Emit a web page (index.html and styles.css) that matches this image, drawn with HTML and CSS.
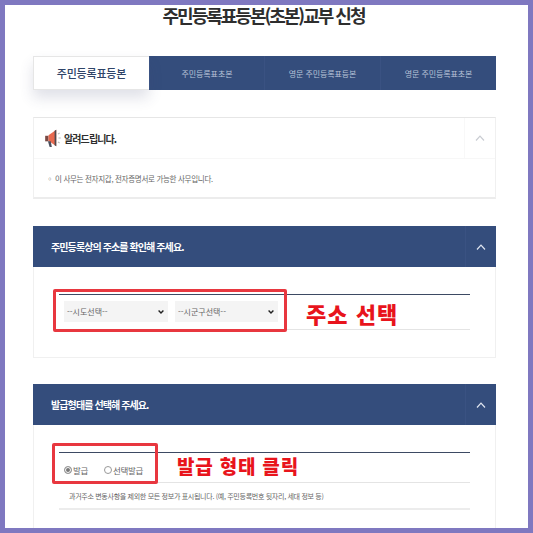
FILE: index.html
```html
<!DOCTYPE html>
<html lang="ko">
<head>
    <meta charset="UTF-8">
    <meta name="viewport" content="width=device-width, initial-scale=1.0">
    <title>주민등록표등본(초본)교부 신청</title>
    <link rel="stylesheet" href="styles.css">
</head>
<body>
    <div class="container">
    <h1>주민등록표등본(초본)교부 신청</h1>

    <!-- 탭 -->
    <div class="tabs">
        <div class="tab active">주민등록표등본</div>
        <div class="tab">주민등록표초본</div>
        <div class="tab">영문 주민등록표등본</div>
        <div class="tab">영문 주민등록표초본</div>
    </div>

    <!-- 알려드립니다 -->
    <div class="section notice">
        <div class="section-head">
            <svg class="megaphone" width="19" height="20" viewBox="0 0 17 18">
                <path d="M1 7h3v5H1z" fill="#7a4a44"/>
                <path d="M4 6.500 11 1.500v15L4 11.500z" fill="#e8694f"/>
                <path d="M9.500 2.500 11 1.500v15l-1.500-1z" fill="#4b4b50"/>
                <path d="M3.500 12h2.500l1 5H5z" fill="#4a4f5e"/>
                <path d="M12.500 5.500l1.500-1M13 9h2M12.500 12.500l1.500 1" stroke="#b9b9b9" fill="none"/>
            </svg>
            <h2>알려드립니다.</h2>
            <span class="toggle">
                <svg width="10" height="6" viewBox="0 0 10 6"><path d="M1 5.500 5 1.200l4 4.300" fill="none" stroke="currentColor" stroke-width="1.200"/></svg>
            </span>
        </div>
        <p class="notice-text">◦ 이 사무는 전자지갑, 전자증명서로 가능한 사무입니다.</p>
    </div>

    <!-- 주소 선택 -->
    <div class="section">
        <div class="section-head dark">
            <h2>주민등록상의 주소를 확인해 주세요.</h2>
            <span class="toggle">
                <svg width="10" height="6" viewBox="0 0 10 6"><path d="M1 5.500 5 1.200l4 4.300" fill="none" stroke="currentColor" stroke-width="1.200"/></svg>
            </span>
        </div>
        <div class="section-body address">
            <div class="form-row">
                <select><option>--시도선택--</option></select>
                <select><option>--시군구선택--</option></select>
            </div>
            <div class="mark mark-address"></div>
            <div class="label label-address">주소 선택</div>
        </div>
    </div>

    <!-- 발급 형태 -->
    <div class="section last">
        <div class="section-head dark">
            <h2>발급형태를 선택해 주세요.</h2>
            <span class="toggle">
                <svg width="10" height="6" viewBox="0 0 10 6"><path d="M1 5.500 5 1.200l4 4.300" fill="none" stroke="currentColor" stroke-width="1.200"/></svg>
            </span>
        </div>
        <div class="section-body issue">
            <div class="form-row radios">
                <label><span class="radio on"></span>발급</label>
                <label><span class="radio"></span>선택발급</label>
            </div>
            <p class="help">과거주소 변동사항을 제외한 모든 정보가 표시됩니다. (예, 주민등록번호 뒷자리, 세대 정보 등)</p>
            <div class="mark mark-issue"></div>
            <div class="label label-issue">발급 형태 클릭</div>
        </div>
    </div>

    </div>
</body>
</html>
```

FILE: styles.css
```css
html, body {
    margin: 0;
    height: 100%;
}
body {
    font-family: "Noto Sans CJK KR", "Noto Sans", sans-serif;
    color: #333;
    background-color: #fff;
}
.container {
    box-sizing: border-box;
    height: 533px;
    overflow: hidden;
    border: 5px solid #7f78c0;
    padding: 0 32px 0 28px;
    background: white;
}
h1 {
    margin: 0;
    height: 51px;
    padding-right: 2px;
    font-size: 18px;
    line-height: 21px;
    letter-spacing: -2px;
    font-weight: 700;
    text-align: center;
    color: #2e2e2e;
}
h2 {
    margin: 0;
    font-size: 10px;
    font-weight: 700;
    letter-spacing: -0.9px;
}
.tabs {
    display: grid;
    grid-template-columns: 116px 115px 116px 116px;
    height: 34px;
    background-color: #344d7c;
}
.tab {
    display: flex;
    align-items: center;
    justify-content: center;
    font-size: 8px;
    letter-spacing: -0.1px;
    color: #b9c4d8;
    border-left: 1px solid #3a5282;
}
.tab.active {
    font-size: 11px;
    font-weight: 500;
    letter-spacing: -0.2px;
    color: #2f4468;
    background: white;
    border: 1px solid #e6e6e6;
    border-right: none;
    box-shadow: 0 8px 14px rgba(60, 70, 110, 0.16);
}
.section {
    margin-top: 27px;
    border: 1px solid #f0f0f0;
    border-top: none;
}
.section.notice {
    height: 82px;
    margin-bottom: 27px;
    box-sizing: border-box;
    border-top: 1px solid #e6e6e6;
    border-bottom: 2px solid #ececec;
}
.section.notice + .section {
    margin-top: 0;
}
.section.last {
    margin-top: 26px;
    border-bottom: none;
}
.section-head {
    display: flex;
    align-items: center;
    height: 40px;
    padding-left: 10px;
    border-bottom: 1px solid #f7f7f7;
    color: #2e2e2e;
}
.section-head .toggle {
    display: flex;
    align-items: center;
    justify-content: center;
    width: 30px;
    align-self: stretch;
    margin-left: auto;
    border-left: 1px solid #f8f8f8;
    color: #c9ccd2;
}
.megaphone {
    margin-right: 1px;
}
.section-head.dark {
    height: 41px;
    padding-left: 18px;
    margin: 0 -1px;
    border-bottom: none;
    background-color: #344d7c;
    color: white;
}
.section-head.dark .toggle {
    border-left-color: #3a5282;
    color: #dfe5f0;
}
.notice-text {
    margin: 13px 0 0 12px;
    font-size: 7.5px;
    line-height: 14px;
    letter-spacing: -0.3px;
    color: #666;
}
.section-body {
    position: relative;
    padding: 27px 25px 0;
}
.section-body.address {
    height: 63px;
}
.section-body.issue {
    height: 103px;
}
.form-row {
    display: flex;
    gap: 7px;
    box-sizing: border-box;
    width: 411px;
    height: 36px;
    padding: 6px 5px 0;
    border-top: 1px solid #3d4a63;
    border-bottom: 1px solid #e4e4e4;
}
select {
    appearance: none;
    width: 104px;
    height: 21px;
    padding: 0 3px;
    border: none;
    font-family: "Noto Sans CJK KR", "Noto Sans", sans-serif;
    font-size: 8px;
    color: #666;
    background: #f4f4f4 url("data:image/svg+xml,%3Csvg xmlns='http://www.w3.org/2000/svg' width='6' height='4'%3E%3Cpath d='M.6.6 3 3l2.400-2.400' fill='none' stroke='%23222' stroke-width='1.400'/%3E%3C/svg%3E") no-repeat right 4px center;
}
select + select {
    width: 103px;
}
.radios {
    gap: 16px;
    height: 31px;
    padding: 10px 5px 0;
}
.radios label {
    display: flex;
    align-items: center;
    gap: 1px;
    height: 14px;
    font-size: 8.500px;
    letter-spacing: -0.3px;
    color: #666;
}
.radio {
    box-sizing: border-box;
    width: 8px;
    height: 8px;
    border: 1px solid #999;
    border-radius: 50%;
}
.radio.on {
    background-color: #777;
    box-shadow: inset 0 0 0 1px white;
}
.help {
    box-sizing: border-box;
    width: 411px;
    height: 27px;
    margin: 0;
    padding-left: 10px;
    border-bottom: 2px solid #ececec;
    font-size: 7px;
    line-height: 27px;
    letter-spacing: -0.3px;
    color: #666;
}
/* 빨간 표시 */
.mark {
    position: absolute;
    box-sizing: border-box;
    border: 3px solid #e8373f;
    border-radius: 2px;
}
.mark-address {
    left: 19px;
    top: 22px;
    width: 234px;
    height: 43px;
}
.mark-issue {
    left: 18px;
    top: 18px;
    width: 106px;
    height: 41px;
}
.label {
    position: absolute;
    font-size: 22px;
    line-height: 26px;
    font-weight: 900;
    color: #e8141c;
    white-space: nowrap;
}
.label-address {
    left: 272px;
    top: 33px;
    letter-spacing: 1px;
}
.label-issue {
    left: 143px;
    top: 28px;
    font-size: 19px;
    letter-spacing: 0.8px;
}
```
